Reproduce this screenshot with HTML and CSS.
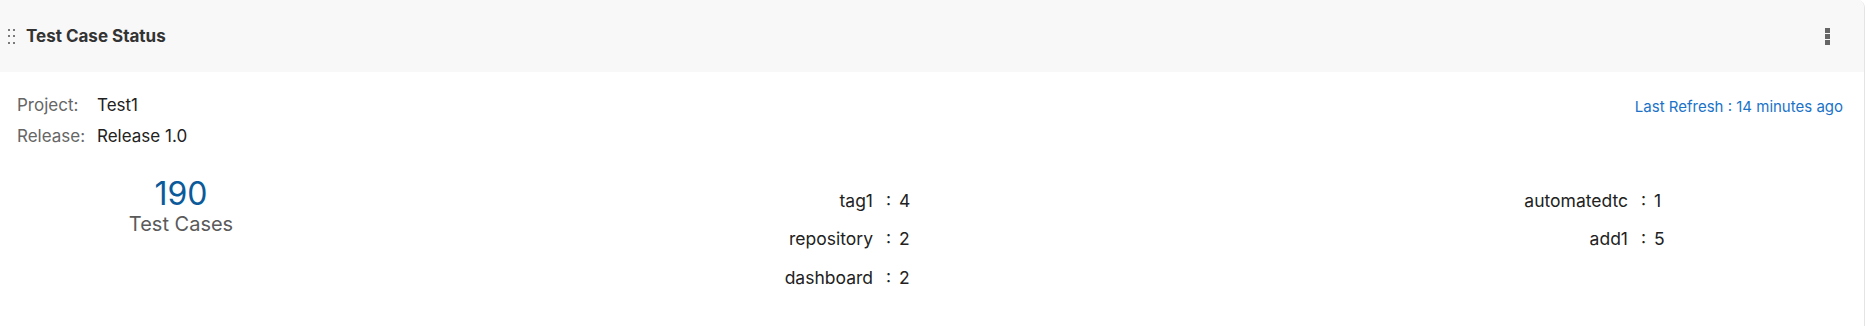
FILE: index.html
```html
<!DOCTYPE html>
<html lang="en">
<head>
  <meta charset="UTF-8">
  <meta name="viewport" content="width=device-width, initial-scale=1.0">
  <title>Test Case Status</title>
  <link rel="stylesheet" href="styles.css">
</head>
<body>
  <div class="widget">
    <div class="widget-header">
      <div class="header-left">
        <span class="drag-handle">
          <i></i><i></i><i></i><i></i><i></i><i></i>
        </span>
        <h3>Test Case Status</h3>
      </div>
      <button class="menu-btn" title="Options">
        <i></i><i></i><i></i>
      </button>
    </div>

    <div class="widget-body">
      <div class="info-row">
        <div class="info">
          <span class="info-label">Project:</span>
          <span class="info-value">Test1</span>
          <span class="info-label">Release:</span>
          <span class="info-value">Release 1.0</span>
        </div>
        <a href="#" class="last-refresh">Last Refresh : 14 minutes ago</a>
      </div>

      <div class="stats">
        <div class="total">
          <div class="total-count">190</div>
          <div class="total-label">Test Cases</div>
        </div>
        <div class="tags">
          <span class="tag-name">tag1</span><span class="tag-count">: 4</span>
          <span class="tag-name">repository</span><span class="tag-count">: 2</span>
          <span class="tag-name">dashboard</span><span class="tag-count">: 2</span>
        </div>
        <div class="tags">
          <span class="tag-name">automatedtc</span><span class="tag-count">: 1</span>
          <span class="tag-name">add1</span><span class="tag-count">: 5</span>
        </div>
      </div>
    </div>
  </div>
</body>
</html>
```

FILE: styles.css
```css
body {
  font-family: Inter, "Noto Sans", Arial, sans-serif;
  background-color: #fff;
  margin: 0;
  padding: 0;
  color: #222;
}

.widget {
  width: 1865px;
  height: 326px;
  box-sizing: border-box;
  background: #fff;
  border-right: 1px solid #e4e4e4;
  border-top-right-radius: 8px;
  overflow: hidden;
}

/* Header */
.widget-header {
  height: 72px;
  background: #f8f8f8;
  display: flex;
  align-items: center;
  justify-content: space-between;
  padding: 0 34px 0 8px;
}

.header-left {
  display: flex;
  align-items: center;
  gap: 11px;
}

.drag-handle {
  display: grid;
  grid-template-columns: 2px 2px;
  gap: 4.5px 3px;
}

.drag-handle i {
  width: 2px;
  height: 2px;
  background: #7a7a7a;
}

.widget-header h3 {
  margin: 0;
  font-size: 17px;
  font-weight: 700;
  color: #333;
}

.menu-btn {
  border: none;
  background: none;
  padding: 0;
  display: flex;
  flex-direction: column;
  gap: 1px;
  cursor: pointer;
}

.menu-btn i {
  width: 5px;
  height: 5px;
  background: #666;
}

/* Body */
.widget-body {
  padding: 18px 21px 0 17px;
}

.info-row {
  display: flex;
  justify-content: space-between;
  align-items: flex-start;
}

.info {
  display: grid;
  grid-template-columns: 80px auto;
  line-height: 31px;
  font-size: 17px;
}

.info-label {
  color: #666;
}

.info-value {
  color: #222;
}

.last-refresh {
  color: #1a73c8;
  font-size: 15px;
  line-height: 33px;
  text-decoration: none;
}

.stats {
  display: grid;
  grid-template-columns: 362px 755px 1fr;
  margin-top: 29px;
  margin-left: -17px;
}

.total {
  text-align: center;
  margin-top: -7px;
}

.total-count {
  font-size: 32px;
  line-height: 39px;
  color: #0b5a9a;
}

.total-label {
  font-size: 20px;
  line-height: 24.5px;
  color: #5a5a5a;
  margin-top: -1px;
}

.tags {
  display: grid;
  grid-template-columns: 524px auto;
  grid-auto-rows: 38.5px;
  align-items: center;
  font-size: 17.5px;
  color: #222;
}

.tag-name {
  text-align: right;
  padding-right: 13px;
}

.tag-count {
  word-spacing: 3px;
}
```
